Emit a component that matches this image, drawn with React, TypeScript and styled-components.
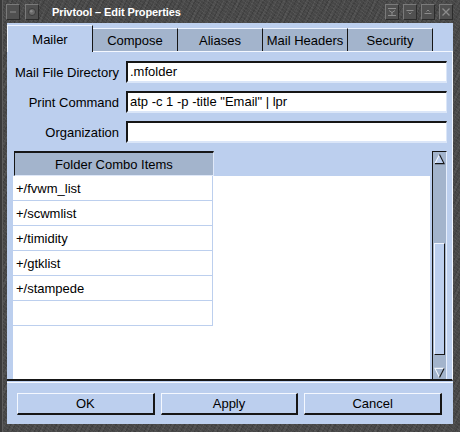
import React from "react";
import styled, { createGlobalStyle } from "styled-components";

const LIGHT = "#bccfee";
const MID = "#a3b4cc";
const DARK = "#161616";

const GlobalStyle = createGlobalStyle`
  html, body { margin: 0; padding: 0; background: #3a3a3a; }
  body { font-family: "Liberation Sans", Arial, sans-serif; }
  * { box-sizing: border-box; }
`;

const Window = styled.div`
  width: 460px;
  height: 432px;
  display: flex;
  flex-direction: column;
  background-color: #474747;
  background-image:
    repeating-linear-gradient(37deg, rgba(255,255,255,0.05) 0 1px, transparent 1px 3px),
    repeating-linear-gradient(-61deg, rgba(0,0,0,0.12) 0 1px, transparent 1px 4px),
    repeating-linear-gradient(113deg, rgba(255,255,255,0.04) 0 2px, transparent 2px 7px);
  border-left: 2px solid #3a3a3a;
  box-shadow: inset 1px 0 0 #5e5e5e;
`;

const TitleBar = styled.div`
  height: 23px;
  flex: none;
  display: flex;
  align-items: flex-start;
  padding: 4px 7px 0 4px;
`;

const TitleGroup = styled.div<{ $gap: number }>`
  display: flex;
  gap: ${(p) => p.$gap}px;
`;

const TitleButton = styled.div`
  width: 14px;
  height: 16px;
  background: #505050;
  border-top: 1px solid #7a7a7a;
  border-left: 1px solid #7a7a7a;
  border-bottom: 1px solid #2c2c2c;
  border-right: 1px solid #2c2c2c;
  display: flex;
  align-items: center;
  justify-content: center;
`;

const Title = styled.div`
  margin-left: 13px;
  margin-top: 1px;
  color: #ffffff;
  font-weight: bold;
  font-size: 11px;
  letter-spacing: -0.1px;
  flex: 1;
  line-height: 14px;
`;

const Client = styled.div`
  flex: 1;
  margin: 0 7px 8px 5px;
  background: ${LIGHT};
  display: flex;
  flex-direction: column;
`;

const TabBar = styled.div`
  height: 28px;
  flex: none;
  display: flex;
  align-items: flex-end;
  position: relative;
  z-index: 1;
`;

const Tab = styled.div<{ $active?: boolean }>`
  width: ${(p) => (p.$active ? 86 : 85)}px;
  height: ${(p) => (p.$active ? 27 : 23)}px;
  margin-bottom: ${(p) => (p.$active ? -1 : 0)}px;
  background: ${(p) => (p.$active ? LIGHT : MID)};
  border-top: 1px solid #eef4ff;
  border-left: ${(p) => (p.$active ? "1px solid #eef4ff" : "none")};
  border-right: 1px solid ${DARK};
  font-size: 13px;
  color: #000;
  display: flex;
  align-items: center;
  justify-content: center;
  padding-top: ${(p) => (p.$active ? 0 : 1)}px;
`;

const Panel = styled.div`
  height: 330px;
  flex: none;
  border-top: 1px solid #f4f8ff;
  border-right: 1px solid #f4f8ff;
  border-bottom: 2px solid ${DARK};
  padding: 9px 5px 0 6px;
  display: flex;
  flex-direction: column;
`;

const FormRow = styled.div`
  height: 22px;
  margin-bottom: 8px;
  display: flex;
  align-items: center;
`;

const Label = styled.div`
  width: 106px;
  margin-right: 7px;
  text-align: right;
  font-size: 13px;
  color: #000;
  white-space: nowrap;
`;

const Field = styled.div`
  flex: 1;
  height: 22px;
  background: #fff;
  border-top: 2px solid ${DARK};
  border-left: 2px solid ${DARK};
  border-bottom: 2px solid #dbe6f8;
  border-right: 1px solid #dbe6f8;
  font-size: 13px;
  line-height: 18px;
  padding-left: 2px;
  color: #000;
  white-space: pre;
  overflow: hidden;
`;

const ListZone = styled.div`
  flex: 1;
  display: flex;
  gap: 2px;
`;

const Viewport = styled.div`
  flex: 1;
  background: #fff;
  display: flex;
  flex-direction: column;
`;

const HeaderRow = styled.div`
  height: 25px;
  background: ${LIGHT};
  display: flex;
`;

const HeaderCell = styled.div`
  width: 200px;
  background: ${MID};
  border-top: 2px solid ${DARK};
  border-left: 1px solid ${DARK};
  border-right: 1px solid #dfe8f8;
  border-bottom: 1px solid #dfe8f8;
  margin-left: 1px;
  font-size: 13px;
  color: #000;
  display: flex;
  align-items: center;
  justify-content: center;
`;

const Row = styled.div`
  width: 200px;
  height: 25px;
  border-right: 1px solid ${LIGHT};
  border-bottom: 1px solid ${LIGHT};
  font-size: 13px;
  color: #000;
  padding-left: 3px;
  display: flex;
  align-items: center;
`;

const Scrollbar = styled.div`
  width: 15px;
  background: ${MID};
  border-top: 1px solid ${DARK};
  border-left: 1px solid ${DARK};
  border-right: 1px solid #e6eefc;
  display: flex;
  flex-direction: column;
  padding: 0 1px 0 1px;
`;

const ArrowBox = styled.div`
  height: 13px;
  flex: none;
  display: flex;
  align-items: center;
  justify-content: center;
`;

const Track = styled.div`
  flex: 1;
  display: flex;
  flex-direction: column;
  padding-top: 78px;
  padding-bottom: 11px;
`;

const Thumb = styled.div`
  flex: 1;
  background: ${LIGHT};
  border-top: 1px solid #f0f5ff;
  border-left: 1px solid #f0f5ff;
  border-right: 1px solid ${DARK};
  border-bottom: 1px solid ${DARK};
`;

const Separator = styled.div`
  height: 1px;
  margin-top: 1px;
  background: #f4f8ff;
  flex: none;
`;

const ButtonRow = styled.div`
  flex: 1;
  display: flex;
  gap: 6px;
  padding: 10px 11px 0 10px;
`;

const Button = styled.div`
  flex: 1;
  height: 22px;
  background: ${LIGHT};
  border-top: 1px solid #f4f8ff;
  border-left: 1px solid #f4f8ff;
  border-right: 2px solid ${DARK};
  border-bottom: 2px solid ${DARK};
  font-size: 13px;
  color: #000;
  display: flex;
  align-items: center;
  justify-content: center;
`;

const ico = "#8c8c8c";

const UpArrow = () => (
  <svg width="12" height="12" viewBox="0 0 12 12">
    <polygon points="6,1 11,11 1,11" fill={LIGHT} />
    <polyline points="1,11 6,1" stroke="#f4f8ff" strokeWidth="1.2" fill="none" />
    <polyline points="6,1 11,11 1,11" stroke={DARK} strokeWidth="1.2" fill="none" />
  </svg>
);

const DownArrow = () => (
  <svg width="12" height="12" viewBox="0 0 12 12">
    <polyline points="11,1 1,1 6,11" stroke="#f4f8ff" strokeWidth="1.2" fill="none" />
    <polyline points="6,11 11,1" stroke={DARK} strokeWidth="1.2" fill="none" />
  </svg>
);

const items = ["+/fvwm_list", "+/scwmlist", "+/timidity", "+/gtklist", "+/stampede", ""];

export default function App() {
  return (
    <>
      <GlobalStyle />
      <Window>
        <TitleBar>
          <TitleGroup $gap={5}>
            <TitleButton>
              <svg width="8" height="8" viewBox="0 0 8 8">
                <line x1="1" y1="4" x2="7" y2="4" stroke={ico} strokeWidth="1" />
              </svg>
            </TitleButton>
            <TitleButton>
              <svg width="10" height="10" viewBox="0 0 10 10">
                <circle cx="5" cy="5" r="3.5" fill="#6a6a6a" stroke="#3a3a3a" />
                <circle cx="4.3" cy="4.3" r="1.3" fill="#8a8a8a" />
              </svg>
            </TitleButton>
          </TitleGroup>
          <Title>Privtool – Edit Properties</Title>
          <TitleGroup $gap={4}>
            <TitleButton>
              <svg width="10" height="10" viewBox="0 0 10 10">
                <path d="M1 1.5h8M1 8.5h8M2 3.5l3 2 3-2" stroke={ico} fill="none" strokeWidth="1" />
                <line x1="5" y1="5" x2="5" y2="8" stroke={ico} />
              </svg>
            </TitleButton>
            <TitleButton>
              <svg width="10" height="10" viewBox="0 0 10 10">
                <path d="M1.5 3.5h7M3.5 5.5l1.5 1.5 1.5-1.5" stroke={ico} fill="none" strokeWidth="1" />
              </svg>
            </TitleButton>
            <TitleButton>
              <svg width="10" height="10" viewBox="0 0 10 10">
                <path d="M1.5 6.5h7M3.5 4.5l1.5-1.5 1.5 1.5" stroke={ico} fill="none" strokeWidth="1" />
              </svg>
            </TitleButton>
            <TitleButton>
              <svg width="10" height="10" viewBox="0 0 10 10">
                <path d="M1.5 1.5l7 7M8.5 1.5l-7 7" stroke={ico} fill="none" strokeWidth="1.3" />
              </svg>
            </TitleButton>
          </TitleGroup>
        </TitleBar>
        <Client>
          <TabBar>
            <Tab $active>Mailer</Tab>
            <Tab>Compose</Tab>
            <Tab>Aliases</Tab>
            <Tab>Mail Headers</Tab>
            <Tab>Security</Tab>
          </TabBar>
          <Panel>
            <FormRow>
              <Label>Mail File Directory</Label>
              <Field>.mfolder</Field>
            </FormRow>
            <FormRow>
              <Label>Print Command</Label>
              <Field>atp -c 1 -p -title "Email" | lpr</Field>
            </FormRow>
            <FormRow>
              <Label>Organization</Label>
              <Field></Field>
            </FormRow>
            <ListZone>
              <Viewport>
                <HeaderRow>
                  <HeaderCell>Folder Combo Items</HeaderCell>
                </HeaderRow>
                {items.map((it, i) => (
                  <Row key={i}>{it}</Row>
                ))}
              </Viewport>
              <Scrollbar>
                <ArrowBox>
                  <UpArrow />
                </ArrowBox>
                <Track>
                  <Thumb />
                </Track>
                <ArrowBox>
                  <DownArrow />
                </ArrowBox>
              </Scrollbar>
            </ListZone>
          </Panel>
          <Separator />
          <ButtonRow>
            <Button>OK</Button>
            <Button>Apply</Button>
            <Button>Cancel</Button>
          </ButtonRow>
        </Client>
      </Window>
    </>
  );
}
